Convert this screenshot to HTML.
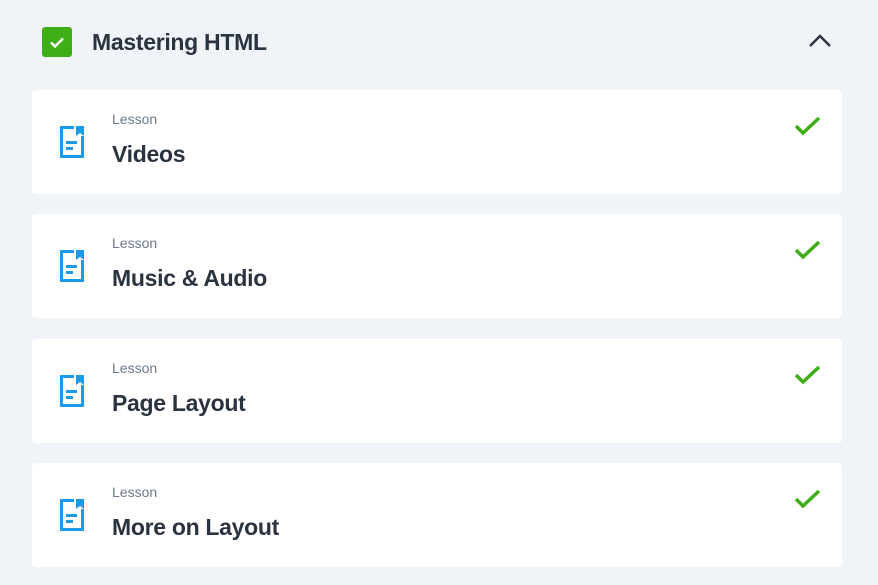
<!DOCTYPE html>
<html><head><style>
body{margin:0;width:878px;height:585px;background:#f0f3f7;font-family:"Liberation Sans",sans-serif;position:relative;overflow:hidden}
.hdr{position:absolute;left:42px;top:27px;width:30px;height:30px;background:#3fae16;border-radius:3px}
.ht{position:absolute;left:92px;top:27px;font-size:23px;font-weight:bold;color:#2a3340;line-height:30px;letter-spacing:-0.3px}
.card{position:absolute;left:32px;width:810px;height:104px;background:#fff;border-radius:4px}
.card svg.doc{position:absolute;left:28px;top:36px}
.lbl{position:absolute;left:80px;top:20px;font-size:14px;color:#6b7a8c;line-height:18px}
.tt{position:absolute;left:80px;top:49px;font-size:23px;font-weight:bold;color:#2a3340;line-height:30px;letter-spacing:-0.3px}
.ck{position:absolute;left:762px;top:26px}
</style></head><body>
<div class="hdr"><svg width="30" height="30"><path d="M9 15.5l4 4 8-8" stroke="#fff" stroke-width="2.5" fill="none"/></svg></div>
<div class="ht">Mastering HTML</div>
<svg style="position:absolute;left:808px;top:33px" width="24" height="16"><path d="M2 13l10-10 10 10" stroke="#2a3340" stroke-width="2.5" fill="none"/></svg>

<div class="card" style="top:90px">
<svg class="doc" width="26" height="32"><path d="M14 1.5H1.5v29h21V10" stroke="#1a9ae8" stroke-width="3" fill="none"/><path d="M16 0h8v10l-4-3-4 3z" fill="#1a9ae8"/><rect x="6" y="15" width="11" height="3" fill="#1a9ae8"/><rect x="6" y="21" width="7" height="3" fill="#1a9ae8"/></svg>
<div class="lbl">Lesson</div><div class="tt">Videos</div>
<svg class="ck" width="28" height="20"><path d="M2 10l7 7 16-15" stroke="#3fae16" stroke-width="3.5" fill="none"/></svg></div>

<div class="card" style="top:214px">
<svg class="doc" width="26" height="32"><path d="M14 1.5H1.5v29h21V10" stroke="#1a9ae8" stroke-width="3" fill="none"/><path d="M16 0h8v10l-4-3-4 3z" fill="#1a9ae8"/><rect x="6" y="15" width="11" height="3" fill="#1a9ae8"/><rect x="6" y="21" width="7" height="3" fill="#1a9ae8"/></svg>
<div class="lbl">Lesson</div><div class="tt">Music &amp; Audio</div>
<svg class="ck" width="28" height="20"><path d="M2 10l7 7 16-15" stroke="#3fae16" stroke-width="3.5" fill="none"/></svg></div>

<div class="card" style="top:339px">
<svg class="doc" width="26" height="32"><path d="M14 1.5H1.5v29h21V10" stroke="#1a9ae8" stroke-width="3" fill="none"/><path d="M16 0h8v10l-4-3-4 3z" fill="#1a9ae8"/><rect x="6" y="15" width="11" height="3" fill="#1a9ae8"/><rect x="6" y="21" width="7" height="3" fill="#1a9ae8"/></svg>
<div class="lbl">Lesson</div><div class="tt">Page Layout</div>
<svg class="ck" width="28" height="20"><path d="M2 10l7 7 16-15" stroke="#3fae16" stroke-width="3.5" fill="none"/></svg></div>

<div class="card" style="top:463px">
<svg class="doc" width="26" height="32"><path d="M14 1.5H1.5v29h21V10" stroke="#1a9ae8" stroke-width="3" fill="none"/><path d="M16 0h8v10l-4-3-4 3z" fill="#1a9ae8"/><rect x="6" y="15" width="11" height="3" fill="#1a9ae8"/><rect x="6" y="21" width="7" height="3" fill="#1a9ae8"/></svg>
<div class="lbl">Lesson</div><div class="tt">More on Layout</div>
<svg class="ck" width="28" height="20"><path d="M2 10l7 7 16-15" stroke="#3fae16" stroke-width="3.5" fill="none"/></svg></div>
</body></html>
